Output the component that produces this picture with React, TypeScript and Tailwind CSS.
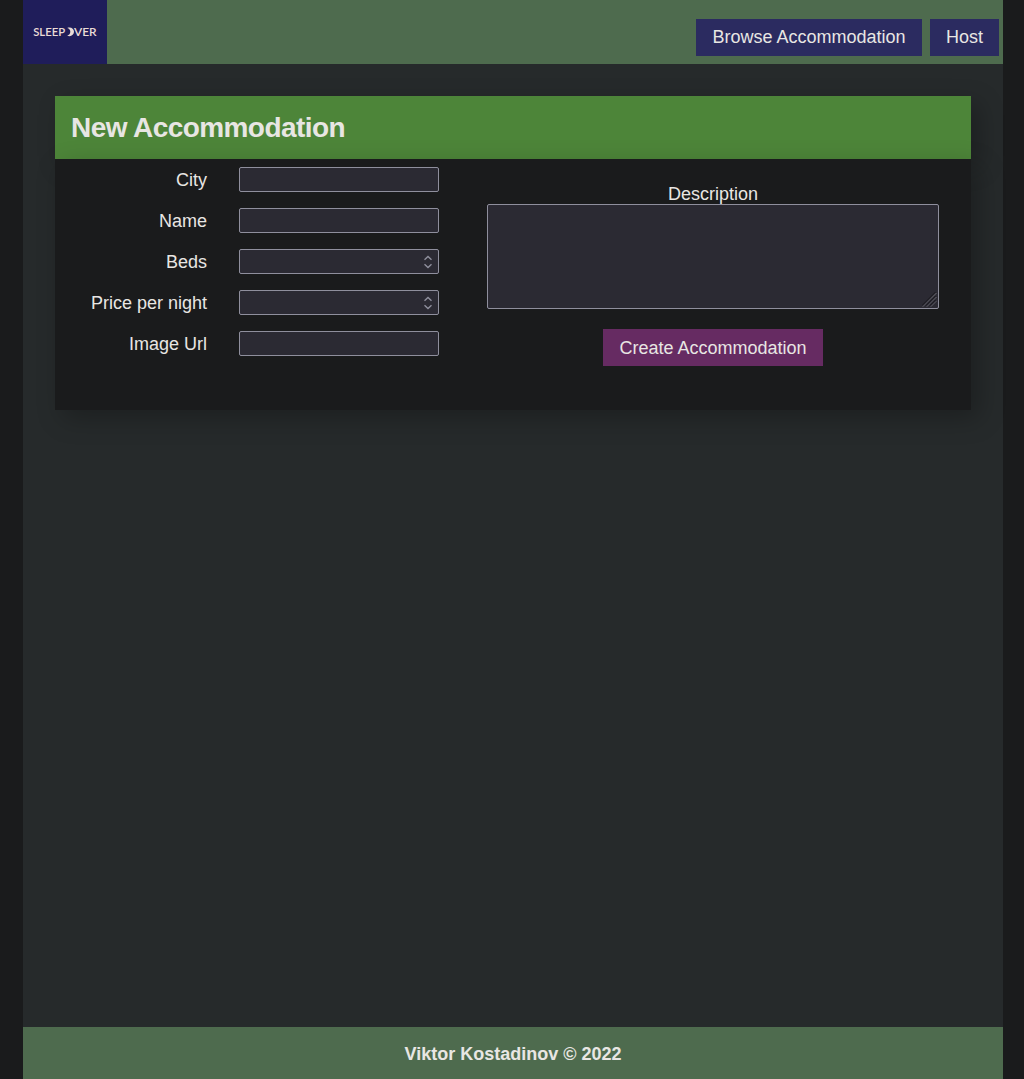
const fields = [
  { label: "City", stepper: false },
  { label: "Name", stepper: false },
  { label: "Beds", stepper: true },
  { label: "Price per night", stepper: true },
  { label: "Image Url", stepper: false },
];

function Logo() {
  return (
    <svg width="84" height="64" viewBox="0 0 84 64" className="block bg-[#1f1d5a]" aria-label="Sleepover">
      <g fill="#eadcd6" fontFamily="Lato, sans-serif" fontSize="11.5" fontWeight="600">
        <text x="10.2" y="36" textLength="32" lengthAdjust="spacingAndGlyphs">SLEEP</text>
        <text x="51" y="36" textLength="22.7" lengthAdjust="spacingAndGlyphs">VER</text>
      </g>
      <path d="M44.2 28.1 C47.5 26.6 51 28.7 51 31.8 C51 35 47.5 37.2 44.2 35.6 C48.4 35 48.4 28.8 44.2 28.1Z" fill="#eadcd6" />
    </svg>
  );
}

function Stepper() {
  return (
    <svg width="10" height="14" viewBox="0 0 10 14" fill="none" stroke="#8f8f9d" strokeWidth="1.4" className="block">
      <path d="M1.5 4.7 L5 1.5 L8.5 4.7 M1.5 9.3 L5 12.5 L8.5 9.3" />
    </svg>
  );
}

function Field({ label, stepper }: { label: string; stepper: boolean }) {
  return (
    <label className="flex h-[25px] items-center">
      <span className="w-[152px] pt-0.5 text-right leading-[25px]">{label}</span>
      <span className="ml-8 flex h-[25px] w-[200px] items-center rounded-[2px] border border-[#8f8f9d] bg-[#2b2a33] pr-[5px]">
        <input className="h-full min-w-0 flex-1 bg-transparent outline-none" />
        {stepper && <Stepper />}
      </span>
    </label>
  );
}

export default function App() {
  return (
    <div className="h-[1079px] overflow-hidden bg-[#1a1b1c] font-['Liberation_Sans',Arial,sans-serif] text-[18px] text-[#e8e6e3]">
      <div className="ml-[23px] flex h-full w-[980px] flex-col bg-[#262a2b]">
        <header className="flex h-16 shrink-0 justify-between bg-[#4e6b4e]">
          <Logo />
          <nav className="mt-[19px] mr-1 flex h-[37px] gap-2">
            <a className="w-[226px] bg-[#2b2b60] text-center leading-9 whitespace-nowrap">Browse Accommodation</a>
            <a className="w-[69px] bg-[#2b2b60] text-center leading-9">Host</a>
          </nav>
        </header>
        <main className="flex-1 p-8">
          <h1 className="h-[63px] bg-[#4d8539] pl-4 text-[28px] leading-[63px] font-bold tracking-[-0.57px] shadow-[8px_8px_24px_rgba(0,0,0,0.25)]">
            New Accommodation
          </h1>
          <form className="flex h-[251px] bg-[#1a1b1c] shadow-[8px_8px_24px_rgba(0,0,0,0.25)]">
            <div className="flex w-[384px] flex-col gap-4 pt-2">
              {fields.map((f) => (
                <Field key={f.label} {...f} />
              ))}
            </div>
            <div className="ml-12 flex w-[452px] flex-col items-center pt-[25px]">
              <label className="leading-5">Description</label>
              <div className="relative h-[105px] w-full">
                <textarea className="block h-full w-full resize-none rounded-[2px] border border-[#8f8f9d] bg-[#2b2a33] outline-none" />
                <svg width="15" height="15" viewBox="0 0 15 15" className="absolute right-[2px] bottom-[2px]" fill="none" strokeWidth="1">
                  <path d="M0 13.5 L13.5 0 M4 13.5 L13.5 4 M8 13.5 L13.5 8" stroke="#18171d" />
                  <path d="M1 14.5 L14.5 1 M5 14.5 L14.5 5 M9 14.5 L14.5 9" stroke="#85848c" strokeDasharray="1 .5" />
                </svg>
              </div>
              <button type="button" className="mt-5 h-[37px] w-[220px] bg-[#662b62] pt-px leading-[37px] whitespace-nowrap">
                Create Accommodation
              </button>
            </div>
          </form>
        </main>
        <footer className="h-[52px] shrink-0 bg-[#4e6b4e] text-center leading-[55px] font-bold">Viktor Kostadinov © 2022</footer>
      </div>
    </div>
  );
}
